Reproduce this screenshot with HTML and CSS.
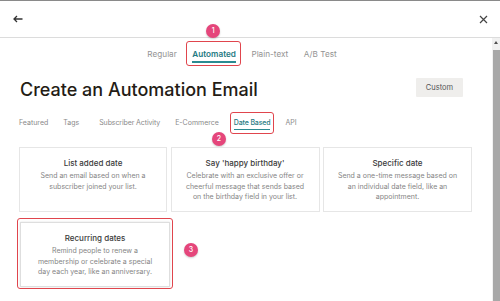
FILE: index.html
```html
<!DOCTYPE html>
<html>
<head>
<meta charset="utf-8">
<link rel="stylesheet" href="styles.css">
</head>
<body>
<div class="frame">
  <header class="topbar">
    <svg class="icon-back" width="10" height="8" viewBox="0 0 10 8"><path d="M9.5 4H1.2M4 1L1 4l3 3" fill="none" stroke="#333" stroke-width="1.3"/></svg>
    <svg class="icon-close" width="9" height="9" viewBox="0 0 9 9"><path d="M1 1l7 7M8 1L1 8" fill="none" stroke="#444" stroke-width="1.2"/></svg>
  </header>
  <div class="body">
    <main class="main">
      <nav class="types">
        <span class="type">Regular</span>
        <span class="type active hl hl-a"><span class="badge badge-1">1</span>Automated</span>
        <span class="type">Plain-text</span>
        <span class="type">A/B Test</span>
      </nav>
      <div class="titlerow">
        <h1 class="title">Create an Automation Email</h1>
        <button class="custom">Custom</button>
      </div>
      <nav class="cats">
        <span class="cat">Featured</span>
        <span class="cat">Tags</span>
        <span class="cat cat-wide">Subscriber Activity</span>
        <span class="cat">E-Commerce</span>
        <span class="cat active hl hl-b"><span class="badge badge-2">2</span>Date Based</span>
        <span class="cat">API</span>
      </nav>
      <section class="cards">
        <div class="card">
          <div class="card-title">List added date</div>
          <div class="card-desc">Send an email based on when a subscriber joined your list.</div>
        </div>
        <div class="card">
          <div class="card-title">Say 'happy birthday'</div>
          <div class="card-desc">Celebrate with an exclusive offer or cheerful message that sends based on the birthday field in your list.</div>
        </div>
        <div class="card">
          <div class="card-title">Specific date</div>
          <div class="card-desc">Send a one-time message based on an individual date field, like an appointment.</div>
        </div>
        <div class="card card-hl">
          <span class="badge badge-3">3</span>
          <div class="card-title">Recurring dates</div>
          <div class="card-desc">Remind people to renew a membership or celebrate a special day each year, like an anniversary.</div>
        </div>
      </section>
    </main>
    <div class="scrollbar">
      <span class="sb-arrow"></span>
      <span class="sb-thumb"></span>
    </div>
  </div>
</div>
</body>
</html>
```
FILE: styles.css
```css
* { box-sizing: border-box; }
html, body { margin: 0; padding: 0; }
body {
  width: 500px;
  height: 301px;
  overflow: hidden;
  background: #fff;
  font-family: Inter, "Open Sans", sans-serif;
  color: #241c15;
}
.frame {
  border-top: 1px solid #8a8a8a;
  height: 301px;
  display: flex;
  flex-direction: column;
}
.topbar {
  height: 37px;
  border-bottom: 1px solid #dcdcdc;
  display: flex;
  align-items: center;
  justify-content: space-between;
  padding: 0 12px 1px 13px;
  flex: none;
}
.icon-close { margin-top: 1px; }
.body {
  flex: 1;
  display: flex;
  min-height: 0;
}
.main {
  flex: 1;
  padding: 0 20px 0 19px;
}
.scrollbar {
  width: 8px;
  background: #f1f1f1;
  position: relative;
  flex: none;
}
.sb-arrow {
  position: absolute;
  left: 2px;
  top: 3px;
  width: 0; height: 0;
  border-left: 2px solid transparent;
  border-right: 2px solid transparent;
  border-bottom: 3px solid #505050;
}
.sb-thumb {
  position: absolute;
  left: 1px;
  right: 0;
  top: 12px;
  bottom: 0;
  background: #a8a8a8;
}
.types {
  display: flex;
  justify-content: center;
  gap: 15.5px;
  padding: 9px 0 0 0;
  margin-left: -7px;
  height: 36px;
}
.type {
  font-size: 8.2px;
  line-height: 11px;
  color: #939393;
  font-weight: 400;
  padding-bottom: 2px;
  height: 16px;
  padding-top: 2px;
  position: relative;
}
.type.active {
  color: #1f7a83;
  font-weight: 600;
  border-bottom: 2px solid #2b8a91;
}
.hl::after {
  content: "";
  position: absolute;
  left: -6px;
  right: -5px;
  top: -6px;
  bottom: -5px;
  border: 1.6px solid #e0454d;
  border-radius: 3px;
}
.badge {
  position: absolute;
  width: 14px;
  height: 14px;
  border-radius: 50%;
  background: #e5467b;
  color: #fff;
  font-size: 7px;
  line-height: 14px;
  text-align: center;
  font-weight: 500;
  box-shadow: 0 1px 2px rgba(0,0,0,0.2);
}
.badge-1 { left: 14px; top: -23px; }
.badge-2 { left: -22px; top: 14px; }
.badge-3 { left: 163px; top: 20px; }
.titlerow {
  display: flex;
  justify-content: space-between;
  align-items: center;
  padding-right: 9px;
  height: 28px;
  margin-top: 1px;
}
.title {
  margin: 0;
  font-size: 18px;
  font-weight: 500;
  letter-spacing: 0;
  color: #241c15;
  margin-left: 1px;
}
.custom {
  border: none;
  background: #efeeec;
  font-family: inherit;
  font-size: 7.5px;
  color: #555;
  width: 47px;
  height: 19px;
  padding: 0;
  border-radius: 1px;
  margin-top: -4px;
}
.cats {
  display: flex;
  gap: 15px;
  padding-top: 15px;
  height: 45px;
}
.cat {
  font-size: 7px;
  line-height: 9px;
  color: #8a8a8a;
  height: 12px;
  position: relative;
}
.cat-wide { margin-left: 5px; letter-spacing: -0.1px; }
.cat.active {
  color: #1f7a83;
  font-weight: 500;
  letter-spacing: -0.15px;
  border-bottom: 1.5px solid #2b8a91;
}
.cat.hl::after {
  left: -4px;
  right: -4px;
  top: -6px;
  bottom: -5px;
}
.cards {
  display: grid;
  grid-template-columns: 148px 149px 149px;
  column-gap: 3.5px;
  row-gap: 10px;
  width: 453px;
  margin-top: -1px;
}
.card {
  border: 1px solid #e6e6e6;
  height: 65px;
  padding: 10px 10px 0;
  text-align: center;
  position: relative;
}
.card-title {
  font-size: 8px;
  line-height: 11px;
  font-weight: 500;
  color: #3a3a3a;
  margin-bottom: 2px;
}
.card-desc {
  font-size: 7px;
  line-height: 10.5px;
  color: #858585;
}
.card-hl {
  margin-left: 1px;
  width: 150px;
  border-color: #dedede;
  box-shadow: 0 0 2px rgba(0,0,0,0.12);
  padding-left: 12px;
  padding-right: 12px;
}
.card-hl::after {
  content: "";
  position: absolute;
  left: -4px;
  right: -4px;
  top: -5px;
  bottom: -3px;
  border: 1.6px solid #e0454d;
  border-radius: 3px;
}
```
